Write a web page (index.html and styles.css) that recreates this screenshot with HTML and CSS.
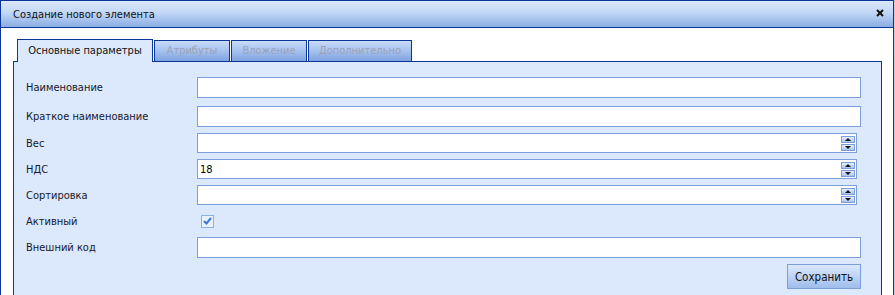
FILE: index.html
```html
<!DOCTYPE html>
<html lang="ru">
<head>
<meta charset="UTF-8" />
<title>Создание нового элемента</title>
<link rel="stylesheet" href="styles.css">
</head>
<body>
<div class="window">
  <div class="titlebar">
    <span class="title">Создание нового элемента</span>
    <span class="close">
      <svg width="8" height="8" viewBox="0 0 8 8"><path d="M1 1L7 7M7 1L1 7" stroke="#111" stroke-width="2"/></svg>
    </span>
  </div>
  <div class="body">
    <div class="tabs">
      <div class="tab active">Основные параметры</div>
      <div class="tab">Атрибуты</div>
      <div class="tab">Вложение</div>
      <div class="tab">Дополнительно</div>
    </div>
    <div class="panel">
      <div class="row first">
        <label>Наименование</label>
        <input class="field" type="text">
      </div>
      <div class="row">
        <label>Краткое наименование</label>
        <input class="field" type="text">
      </div>
      <div class="row">
        <label>Вес</label>
        <div class="spin">
          <input type="text">
          <div class="spin-btns">
            <span class="up"></span>
            <span class="down"></span>
          </div>
        </div>
      </div>
      <div class="row">
        <label>НДС</label>
        <div class="spin">
          <input type="text" value="18">
          <div class="spin-btns">
            <span class="up"></span>
            <span class="down"></span>
          </div>
        </div>
      </div>
      <div class="row">
        <label>Сортировка</label>
        <div class="spin">
          <input type="text">
          <div class="spin-btns">
            <span class="up"></span>
            <span class="down"></span>
          </div>
        </div>
      </div>
      <div class="row check-row">
        <label>Активный</label>
        <span class="checkbox">
          <svg width="9" height="8" viewBox="0 0 9 8"><path d="M1 4L3.5 6.5L8 1" fill="none" stroke="#3d78d6" stroke-width="2"/></svg>
        </span>
      </div>
      <div class="row">
        <label>Внешний код</label>
        <input class="field" type="text">
      </div>
      <div class="actions">
        <button class="save">Сохранить</button>
      </div>
    </div>
  </div>
</div>
</body>
</html>
```

FILE: styles.css
```css
body {
  margin: 0;
  font-family: "DejaVu Sans Condensed", "Liberation Sans", Arial, sans-serif;
  font-size: 11px;
  color: #15182a;
  background-color: #c4cede;
  overflow: hidden;
}
.window {
  width: 894px;
  height: 295px;
  box-sizing: border-box;
  border: 1px solid #0b3596;
  border-bottom: none;
  background-color: #fff;
  overflow: hidden;
}
.titlebar {
  height: 26px;
  border-bottom: 1px solid #0b3596;
  background: linear-gradient(#dbe8fc, #c2d7f6 45%, #8badE3);
  display: flex;
  align-items: center;
  justify-content: space-between;
  padding: 0 9px 0 12px;
}
.title {
  color: #111;
}
.close {
  display: flex;
  margin-top: -2px;
}
.body {
  padding: 11px 11px 0 12px;
}
.tabs {
  display: flex;
  align-items: flex-end;
  gap: 1px;
  padding-left: 4px;
  height: 22px;
}
.tab {
  height: 21px;
  line-height: 20px;
  box-sizing: border-box;
  border: 1px solid #0b3596;
  border-bottom: none;
  padding: 0;
  text-align: center;
  white-space: nowrap;
  color: #9aa3b6;
  background: linear-gradient(#c9dcf8, #a6c1ee 50%, #7ea3df);
}
.tab:nth-child(2) {
  width: 76px;
}
.tab:nth-child(3) {
  width: 76px;
}
.tab:nth-child(4) {
  width: 104px;
}
.tab.active {
  width: 136px;
  height: 23px;
  line-height: 22px;
  margin-bottom: -1px;
  color: #111;
  background: #dce9fc;
  position: relative;
  z-index: 1;
}
.panel {
  border: 1px solid #0b3596;
  border-bottom: none;
  background-color: #dce9fc;
  height: 240px;
  padding: 15px 20px 0 12px;
}
.row {
  display: flex;
  align-items: center;
  margin-bottom: 6px;
}
.row.first {
  margin-bottom: 8px;
}
.row label {
  width: 171px;
  flex: none;
  white-space: nowrap;
}
.field {
  flex: 1;
  height: 21px;
  box-sizing: border-box;
  border: 1px solid #7c9fdc;
  background: #fff;
  margin: 0;
  padding: 0 3px;
  font: inherit;
}
.spin {
  flex: 1;
  display: flex;
  align-items: center;
  height: 20px;
  box-sizing: border-box;
  border: 1px solid #7c9fdc;
  background: #fff;
  margin-right: 4px;
  padding-right: 1px;
}
.spin input {
  flex: 1;
  border: none;
  outline: none;
  height: 16px;
  padding: 0 2px;
  font: inherit;
  background: transparent;
}
.spin-btns {
  display: flex;
  flex-direction: column;
  gap: 1px;
}
.spin-btns span {
  width: 14px;
  height: 7px;
  box-sizing: border-box;
  border: 1px solid #7c9fdc;
  background: linear-gradient(#e3eefd, #a9c3ef);
  display: flex;
  align-items: center;
  justify-content: center;
}
.spin-btns .up::after {
  content: "";
  border-left: 3px solid transparent;
  border-right: 3px solid transparent;
  border-bottom: 3px solid #111;
}
.spin-btns .down::after {
  content: "";
  border-left: 3px solid transparent;
  border-right: 3px solid transparent;
  border-top: 3px solid #111;
}
.check-row {
  height: 20px;
}
.checkbox {
  width: 13px;
  height: 13px;
  box-sizing: border-box;
  border: 1px solid #8fb0e6;
  background: #e9f1fd;
  margin-left: 4px;
  display: flex;
  align-items: center;
  justify-content: center;
}
.actions {
  display: flex;
  justify-content: flex-end;
}
.save {
  width: 74px;
  height: 25px;
  border: 1px solid #7c9fdc;
  background: linear-gradient(#dce9fc, #b7cff3 60%, #a0bdea);
  font: inherit;
  font-size: 11.5px;
  color: #111;
  padding: 0;
}
```
